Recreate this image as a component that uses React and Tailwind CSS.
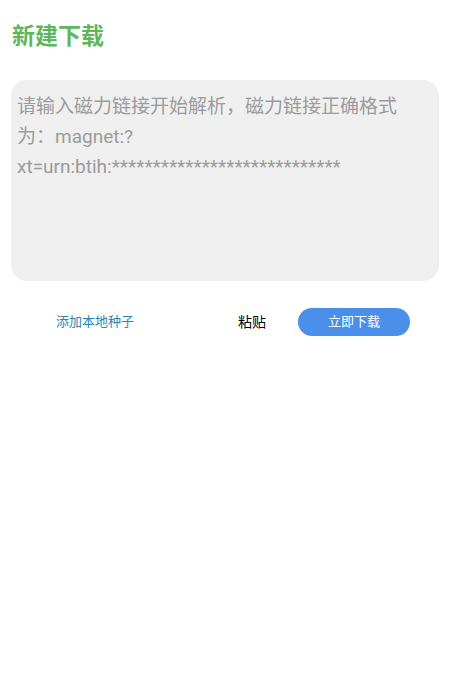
import React from 'react';

const font = { fontFamily: 'Roboto, "Noto Sans CJK SC", sans-serif' };

export default function App() {
  const stars = '*'.repeat(28);

  return (
    <div className="min-h-[673px] w-[450px] bg-white" style={font}>
      <h1 className="pl-[12px] pt-[22px] text-[23px] font-bold leading-[30px] text-[#5db75a]">新建下载</h1>

      <div className="mx-[11px] mt-[28px] h-[201px] rounded-[16px] bg-[#efefef] pl-[6px] pt-[12px] text-[19px] leading-[30px] text-[#9b9b9b]">
        <div className="whitespace-nowrap">请输入磁力链接开始解析，磁力链接正确格式</div>
        <div className="whitespace-nowrap">为：magnet:?</div>
        <div className="whitespace-nowrap">xt=urn:btih:{stars}</div>
      </div>

      <div className="mt-[27px] flex items-center">
        <div className="w-[190px] text-center text-[13px] text-[#2b86b3]">添加本地种子</div>
        <div className="ml-[48px] text-[14px] text-black">粘贴</div>
        <button className="ml-[32px] flex h-[28px] w-[112px] items-center justify-center rounded-full bg-[#4a8fea] text-[13px] text-white">
          立即下载
        </button>
      </div>
    </div>
  );
}
